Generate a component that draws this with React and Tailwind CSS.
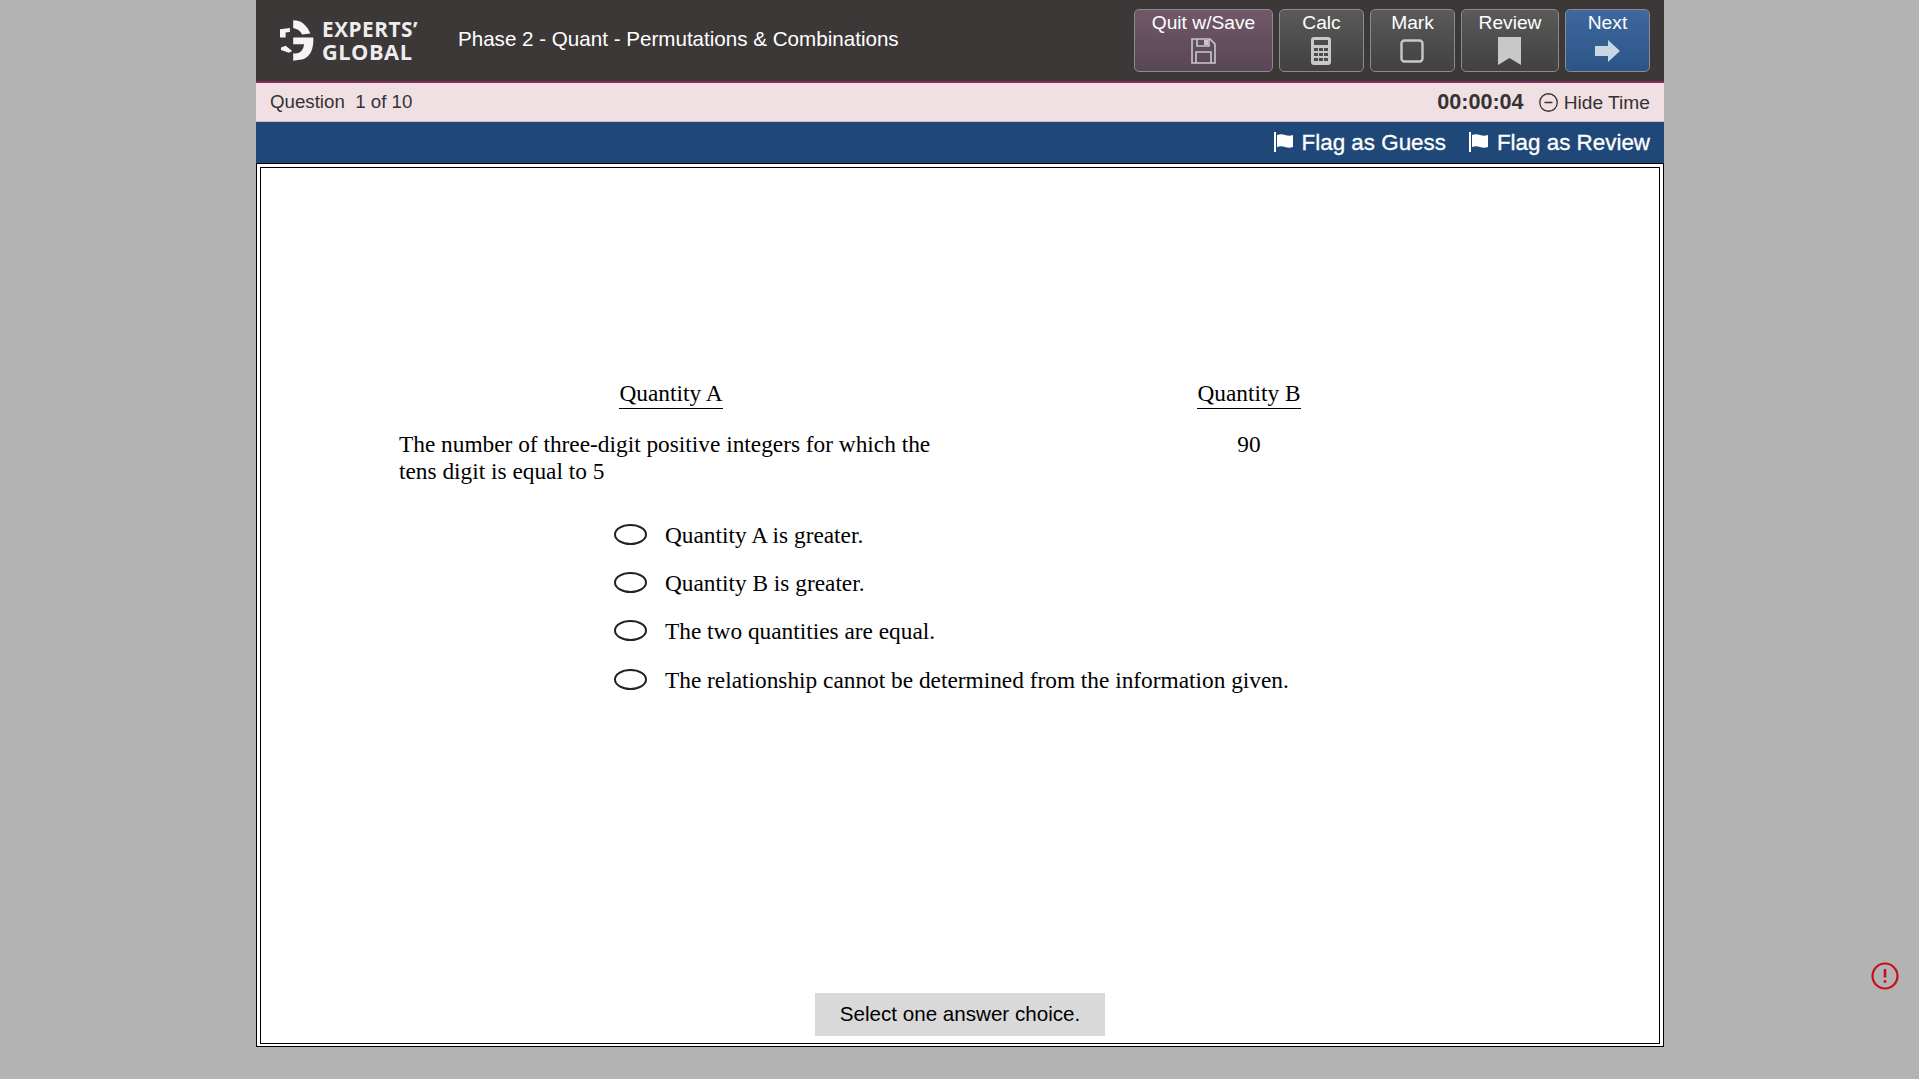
import { CircleMinus } from 'lucide-react';

const choices = [
  'Quantity A is greater.',
  'Quantity B is greater.',
  'The two quantities are equal.',
  'The relationship cannot be determined from the information given.',
];

function Logo() {
  return (
    <div className="flex items-center gap-[8px] ml-[2px]">
      <svg width="34" height="41" viewBox="45 45 103 122" fill="#f4f4f4">
        <path d="M85 45 Q120 45 137 85 L112 88 Q105 72 85 68 Z" />
        <path d="M45 72 L75 68 L75 80 L62 82 L62 97 L45 97 Z" />
        <path d="M48 127 L62 122 L82 138 L72 143 L48 135 Z" />
        <path d="M85 97 L146 97 Q148 150 115 163 L85 167 L85 145 Q115 148 118 117 L85 117 Z" />
      </svg>
      <div className="font-['Open_Sans',sans-serif] font-bold leading-[23px] text-[#ededed]">
        <div className="text-[20.8px] tracking-[0.5px]">EXPERTS’</div>
        <div className="text-[21.8px] tracking-[0.5px] -mt-[1px]">GLOBAL</div>
      </div>
    </div>
  );
}

function ToolButton({ label, width, tone, children }) {
  return (
    <button className={`${width} ${tone} h-[63px] rounded-[5px] border border-[#8b8b8b] flex flex-col items-center pt-[1px] text-[19.2px] leading-[24px] text-white`}>
      <span>{label}</span>
      <span className="h-[32px] flex items-center justify-center -ml-[1px]">{children}</span>
    </button>
  );
}

function FlagIcon() {
  return (
    <svg width="20" height="20" viewBox="0 0 20 20" fill="#fff">
      <rect x="0" y="0" width="2" height="20" />
      <path d="M3 3 Q7 1.5 11 3 Q15 4.5 19 3 L19 15 Q15 16.5 11 15 Q7 13.5 3 15 Z" />
    </svg>
  );
}

export default function App() {
  return (
    <div className="relative h-screen bg-[#b3b3b3] font-['Liberation_Sans',Arial,sans-serif]">
      <div className="w-[1408px] ml-[256px] h-[1047px] flex flex-col">
        {/* top bar */}
        <div className="h-[83px] shrink-0 bg-[#3c3838] border-b-2 border-[#8b2a5b] flex items-center pl-[22px] pr-[14px]">
          <Logo />
          <div className="ml-[40px] -mt-[3px] text-[20.6px] text-white">Phase 2 - Quant - Permutations &amp; Combinations</div>
          <div className="ml-auto flex gap-[6px]">
            <ToolButton label="Quit w/Save" width="w-[139px]" tone="bg-gradient-to-b from-[#715868] to-[#594656]">
              <svg width="26" height="26" viewBox="0 0 26 26" fill="none" stroke="#c8c8c8" strokeWidth="1.6">
                <path d="M2 1 H20 L25 6 V25 H2 Z" />
                <path d="M7 1 V8 H19 V1" />
                <rect x="14" y="2" width="4" height="5" fill="#c8c8c8" stroke="none" />
                <path d="M6 25 V14 H21 V25" />
              </svg>
            </ToolButton>
            <ToolButton label="Calc" width="w-[85px]" tone="bg-gradient-to-b from-[#5a5a5a] to-[#414141]">
              <svg width="20" height="28" viewBox="0 0 20 28">
                <rect width="20" height="28" rx="3" fill="#c8c8c8" />
                <rect x="3" y="3" width="14" height="5" fill="#4b4b4b" />
                <path d="M3 11 H7 V14 H3 Z M8 11 H12 V14 H8 Z M13 11 H17 V14 H13 Z M3 16 H7 V19 H3 Z M8 16 H12 V19 H8 Z M13 16 H17 V19 H13 Z M3 21 H7 V24 H3 Z M8 21 H12 V24 H8 Z M13 21 H17 V24 H13 Z" fill="#4b4b4b" />
              </svg>
            </ToolButton>
            <ToolButton label="Mark" width="w-[85px]" tone="bg-gradient-to-b from-[#5a5a5a] to-[#414141]">
              <svg width="24" height="24" viewBox="0 0 24 24" fill="none">
                <rect x="1.5" y="1.5" width="21" height="21" rx="3" stroke="#c8c8c8" strokeWidth="2.4" />
              </svg>
            </ToolButton>
            <ToolButton label="Review" width="w-[98px]" tone="bg-gradient-to-b from-[#5a5a5a] to-[#414141]">
              <svg width="23" height="28" viewBox="0 0 23 28" fill="#c8c8c8">
                <path d="M0 0 H23 V28 L11.5 21 L0 28 Z" />
              </svg>
            </ToolButton>
            <ToolButton label="Next" width="w-[85px]" tone="bg-gradient-to-b from-[#3e689e] to-[#2c5587] border-[#7d9cc4]">
              <svg width="25" height="22" viewBox="0 0 25 22" fill="#c9d6e6">
                <path d="M0 6 H13 V0 L25 11 L13 22 V16 H0 Z" />
              </svg>
            </ToolButton>
          </div>
        </div>

        {/* question / timer bar */}
        <div className="h-[39px] shrink-0 bg-[#f0e0e3] border-b border-[#c9bcbc] flex items-center px-[14px] text-[#333]">
          <span className="text-[18.7px]">Question&nbsp; 1 of 10</span>
          <span className="ml-auto font-bold text-[21.6px] mt-[1px]">00:00:04</span>
          <CircleMinus className="ml-[14px] mr-[5px] w-[21px] h-[21px] mt-[1px]" strokeWidth={1.5} />
          <span className="text-[19.2px] mt-[2px]">Hide Time</span>
        </div>

        {/* flag bar */}
        <div className="h-[41px] shrink-0 bg-[#1f4879] flex items-center justify-end gap-[23px] pr-[14px] text-white text-[22.4px] [-webkit-text-stroke:0.3px_white]">
          <span className="flex items-center gap-[8px]"><FlagIcon />Flag as Guess</span>
          <span className="flex items-center gap-[8px]"><FlagIcon />Flag as Review</span>
        </div>

        {/* question frame */}
        <div className="flex-1 border border-black bg-white p-[3px] pb-[2px] min-h-0">
          <div className="h-full border border-black flex flex-col font-['Liberation_Serif',serif] text-[23.33px] leading-[27px] text-black">
            <div className="flex-1 pt-[212px] pl-[138px]">
              <div className="grid grid-cols-[544px_612px] text-center">
                <div><span className="inline-block border-b border-black pb-[1px]">Quantity A</span></div>
                <div><span className="inline-block border-b border-black pb-[1px]">Quantity B</span></div>
                <div className="mt-[22px] text-left">The number of three-digit positive integers for which the<br />tens digit is equal to 5</div>
                <div className="mt-[22px]">90</div>
              </div>
              <div className="mt-[26px] ml-[215px] flex flex-col">
                {choices.map((c) => (
                  <div key={c} className="h-[48.3px] flex items-center gap-[18px]">
                    <span className="w-[33px] h-[21px] rounded-[50%] border-2 border-[#222] -mt-[2px]" />
                    <span>{c}</span>
                  </div>
                ))}
              </div>
            </div>
            <div className="flex justify-center mb-[7px]">
              <div className="w-[290px] h-[43px] pb-[2px] bg-[#d9d9d9] flex items-center justify-center font-['Liberation_Sans',Arial,sans-serif] text-[20.6px]">
                Select one answer choice.
              </div>
            </div>
          </div>
        </div>
      </div>

      {/* error marker */}
      <svg className="absolute left-[1871px] top-[962px]" width="28" height="28" viewBox="0 0 28 28" fill="none" stroke="#c8101c" strokeWidth="2.2">
        <circle cx="14" cy="14" r="12.5" />
        <path d="M14 7 V15.5" strokeWidth="2.6" />
        <circle cx="14" cy="19.5" r="1.4" fill="#c8101c" stroke="none" />
      </svg>
    </div>
  );
}
